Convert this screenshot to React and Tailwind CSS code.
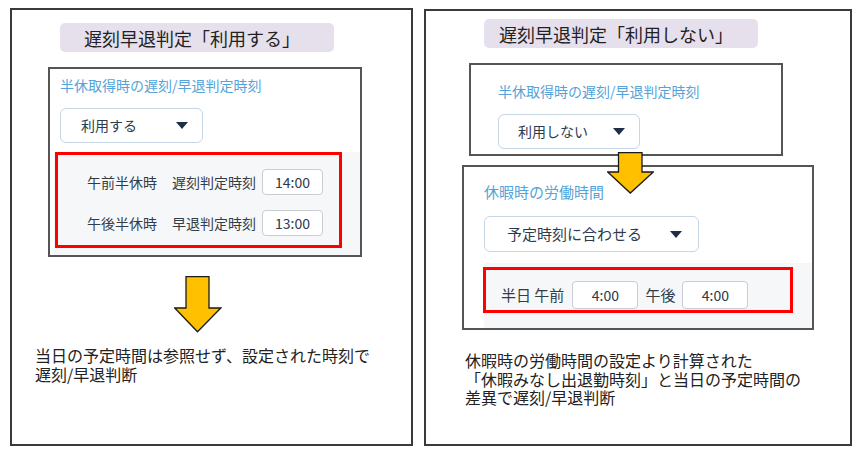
const Caret = () => (
  <svg width="12" height="7" viewBox="0 0 12 7">
    <path d="M0 0h12L6 7z" fill="#1f2e44" />
  </svg>
);

const LeftArrow = () => (
  <svg width="48" height="57" viewBox="0 0 48 57" className="block">
    <polygon
      points="12,0.7 35,0.7 35,32 46.8,32 23.5,55.8 0.7,32 12,32"
      fill="#ffc000"
      stroke="#1a1a1a"
      strokeWidth="1.3"
      strokeLinejoin="miter"
    />
  </svg>
);

const RightArrow = () => (
  <svg width="47" height="42" viewBox="0 0 47 42" className="block">
    <polygon
      points="11.5,0.7 35,0.7 35,20 46.3,20 23.3,41 0.7,20 11.5,20"
      fill="#ffc000"
      stroke="#1a1a1a"
      strokeWidth="1.3"
    />
  </svg>
);

const Select = ({ label, className, textClass, prClass }) => (
  <div
    className={`flex items-center justify-between rounded-md border border-[#c7d6e4] bg-white ${className} ${prClass}`}
  >
    <span className={`text-[#2d3b4b] ${textClass}`}>{label}</span>
    <Caret />
  </div>
);

const TimeBox = ({ value, className }) => (
  <div
    className={`flex items-center justify-center rounded-[4px] border border-[#c9cdd2] bg-white text-[14px] text-[#2b3a4a] ${className}`}
  >
    {value}
  </div>
);

export default function App() {
  return (
    <div
      className="flex h-[453px] w-[862px] items-start gap-[11px] bg-white pl-[10px] pt-[8px]"
      style={{ fontFamily: '"Noto Sans CJK JP", "Noto Sans", sans-serif' }}
    >
      {/* 左：利用する */}
      <div className="flex h-[438px] w-[403px] flex-col border-2 border-[#3a3a3a]">
        <div className="ml-[48px] mt-[13px] flex h-[29px] w-[274px] items-center rounded-[5px] bg-[#e6e0ec] pl-[24px] text-[18px] leading-none text-[#222]">
          遅刻早退判定「利用する」
        </div>

        <div className="ml-[36px] mt-[15px] flex h-[190px] w-[314px] flex-col border-2 border-[#555]">
          <div className="ml-[10px] mt-[6px] text-[14px] leading-[20px] text-[#55a3d8]">
            半休取得時の遅刻/早退判定時刻
          </div>
          <Select
            label="利用する"
            className="ml-[10px] mt-[13px] h-[35px] w-[143px] pl-[20px]"
            prClass="pr-[14px]"
            textClass="text-[14px]"
          />
          <div className="ml-[4px] mt-[9px] flex-1 bg-[#f5f7f9]">
            <div className="ml-px flex h-[96px] w-[287px] flex-col gap-[15px] border-[3px] border-[#ff0000] pl-[29px] pt-[14px]">
              <div className="flex h-[26px] items-center text-[14px] text-[#333d47]">
                <span>午前半休時</span>
                <span className="ml-[15px]">遅刻判定時刻</span>
                <TimeBox value="14:00" className="ml-[6px] h-[26px] w-[61px]" />
              </div>
              <div className="flex h-[26px] items-center text-[14px] text-[#333d47]">
                <span>午後半休時</span>
                <span className="ml-[15px]">早退判定時刻</span>
                <TimeBox value="13:00" className="ml-[6px] h-[26px] w-[61px]" />
              </div>
            </div>
          </div>
        </div>

        <div className="ml-[162px] mt-[19px]">
          <LeftArrow />
        </div>

        <div className="ml-[23px] mt-[13px] text-[16px] text-[#222]">
          <div className="h-[19px] leading-[19px]">当日の予定時間は参照せず、設定された時刻で</div>
          <div className="h-[19px] leading-[19px]">遅刻/早退判断</div>
        </div>
      </div>

      {/* 右：利用しない */}
      <div className="relative mt-px flex h-[437px] w-[428px] flex-col border-2 border-[#3a3a3a]">
        <div className="ml-[58px] mt-[8px] flex h-[29px] w-[274px] items-center rounded-[5px] bg-[#e6e0ec] pl-[15px] text-[18px] leading-none text-[#222]">
          遅刻早退判定「利用しない」
        </div>

        <div className="ml-[43px] mt-[15px] flex h-[93px] w-[314px] flex-col border-2 border-[#555]">
          <div className="ml-[27px] mt-[16px] text-[14px] leading-[20px] text-[#55a3d8]">
            半休取得時の遅刻/早退判定時刻
          </div>
          <Select
            label="利用しない"
            className="ml-[27px] mt-[13px] h-[35px] w-[142px] pl-[19px]"
            prClass="pr-[14px]"
            textClass="text-[14px]"
          />
        </div>

        <div className="ml-[36px] mt-[9px] flex h-[165px] w-[352px] flex-col border-2 border-[#555]">
          <div className="ml-[20px] mt-[15px] text-[15px] leading-[20px] text-[#55a3d8]">
            休暇時の労働時間
          </div>
          <Select
            label="予定時刻に合わせる"
            className="ml-[20px] mt-[14px] h-[36px] w-[215px] pl-[22px]"
            prClass="pr-[16px]"
            textClass="text-[15px]"
          />
          <div className="ml-[20px] mt-[11px] flex-1 bg-[#f5f7f9] pt-[4px]">
            <div className="-ml-px flex h-[46px] w-[310px] items-center border-[3px] border-[#ff0000] pl-[15px] pt-[10px] text-[15px] text-[#333d47]">
              <span>半日 午前</span>
              <TimeBox value="4:00" className="ml-[8px] h-[28px] w-[66px]" />
              <span className="ml-[7px]">午後</span>
              <TimeBox value="4:00" className="ml-[7px] h-[28px] w-[66px]" />
            </div>
          </div>
        </div>

        <div className="absolute left-[181px] top-[141px]">
          <RightArrow />
        </div>

        <div className="ml-[39px] mt-[21px] text-[16px] text-[#222]">
          <div className="h-[18.5px] leading-[18.5px]">休暇時の労働時間の設定より計算された</div>
          <div className="h-[18.5px] leading-[18.5px]">「休暇みなし出退勤時刻」と当日の予定時間の</div>
          <div className="h-[18.5px] leading-[18.5px]">差異で遅刻/早退判断</div>
        </div>
      </div>
    </div>
  );
}
